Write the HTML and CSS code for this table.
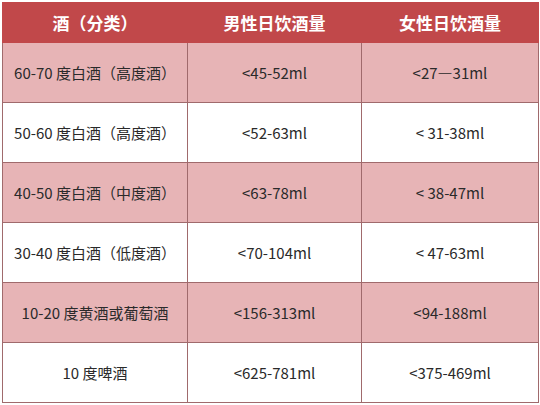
FILE: index.html
```html
<!DOCTYPE html>
<html lang="zh">
<head>
<meta charset="utf-8">
<link rel="stylesheet" href="styles.css">
</head>
<body>
<table class="tbl">
  <colgroup>
    <col class="c1"><col class="c2"><col class="c3">
  </colgroup>
  <thead>
    <tr class="head">
      <th>酒（分类）</th>
      <th>男性日饮酒量</th>
      <th>女性日饮酒量</th>
    </tr>
  </thead>
  <tbody>
    <tr class="pink"><td>60-70 度白酒（高度酒）</td><td>&lt;45-52ml</td><td>&lt;27—31ml</td></tr>
    <tr class="white"><td>50-60 度白酒（高度酒）</td><td>&lt;52-63ml</td><td>&lt; 31-38ml</td></tr>
    <tr class="pink"><td>40-50 度白酒（中度酒）</td><td>&lt;63-78ml</td><td>&lt; 38-47ml</td></tr>
    <tr class="white"><td>30-40 度白酒（低度酒）</td><td>&lt;70-104ml</td><td>&lt; 47-63ml</td></tr>
    <tr class="pink"><td>10-20 度黄酒或葡萄酒</td><td>&lt;156-313ml</td><td>&lt;94-188ml</td></tr>
    <tr class="white"><td>10 度啤酒</td><td>&lt;625-781ml</td><td>&lt;375-469ml</td></tr>
  </tbody>
</table>
</body>
</html>
```
FILE: styles.css
```css
html, body {
  margin: 0;
  padding: 0;
  background: #ffffff;
}
body {
  padding: 2px 0 0 2px;
  font-family: "Noto Sans CJK SC", "Noto Sans", sans-serif;
}
.tbl {
  width: 536px;
  border-collapse: collapse;
  table-layout: fixed;
}
.c1 { width: 185px; }
.c2 { width: 174px; }
.c3 { width: 177px; }
.head th {
  height: 39px;
  padding: 0;
  background: #c1484a;
  color: #ffffff;
  font-size: 17px;
  font-weight: bold;
  text-align: center;
  border: 1px solid #c1484a;
}
.tbl td {
  height: 59px;
  padding: 0;
  text-align: center;
  font-size: 15px;
  color: #2a2a2a;
  border: 1px solid #a06a6c;
}
.pink td { background: #e7b4b6; }
.white td { background: #ffffff; }
```
